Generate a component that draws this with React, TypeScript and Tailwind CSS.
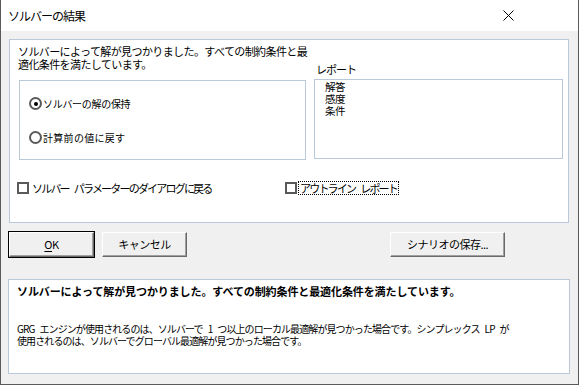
import React from "react";

const Radio = ({ checked }: { checked?: boolean }) => (
  <span className="relative inline-block w-[13px] h-[13px] rounded-full border-2 border-[#5a5a5a] bg-white shrink-0">
    {checked && <span className="absolute left-[2.5px] top-[2.5px] w-[4px] h-[4px] rounded-full bg-black" />}
  </span>
);

const Check = () => (
  <span className="inline-block w-[12px] h-[12px] border-2 border-[#5a5a5a] bg-white shrink-0" />
);

const Sp = () => <span className="inline-block w-[5px]" />;

const Btn = ({ children, w, def }: { children: React.ReactNode; w: string; def?: boolean }) => (
  <div className={`${def ? "border border-black" : "border border-transparent"}`}>
    <div
      className={`${w} h-[25px] flex items-center justify-center bg-[#f0f0f0] border-t border-l border-t-white border-l-white border-b border-r border-b-[#696969] border-r-[#696969] shadow-[inset_-1px_-1px_0_#a0a0a0] text-[11px] tracking-[-0.5px]`}
    >
      {children}
    </div>
  </div>
);

export default function App() {
  return (
    <div className="w-[579px] h-[385px] bg-[#f0f0f0] border-x border-b border-[#5a5a5a] flex flex-col text-black font-['Noto_Sans_CJK_JP',sans-serif] overflow-hidden">
      <div className="h-[31px] bg-white flex items-center justify-between shrink-0">
        <span className="pl-[7px] text-[12px] tracking-[-1px] leading-none">ソルバーの結果</span>
        <svg width="11" height="11" viewBox="0 0 11 11" className="mr-[64px]">
          <path d="M0.5 0.5 L10.5 10.5 M10.5 0.5 L0.5 10.5" stroke="#000" strokeWidth="1" />
        </svg>
      </div>
      <div className="pl-[7px] pt-[8px] flex flex-col">
        <div className="ml-[1px] w-[560px] h-[184px] border border-[#b9c9d9] bg-white flex flex-col">
          <div className="flex pl-[8px] pt-[5px]">
            <div className="w-[288px] flex flex-col">
              <p className="text-[11px] leading-[13px] tracking-[-0.6px] whitespace-nowrap">
                ソルバーによって解が見つかりました。すべての制約条件と最
                <br />
                適化条件を満たしています。
              </p>
              <div className="ml-[1px] mt-[9px] w-[287px] h-[80px] border border-[#b9c9d9] flex flex-col pl-[9px]">
                <div className="flex items-center mt-[16px] h-[13px] gap-[1px]">
                  <Radio checked />
                  <span className="text-[10px] tracking-[-0.3px] leading-none">ソルバーの解の保持</span>
                </div>
                <div className="flex items-center mt-[21px] h-[13px] gap-[1px]">
                  <Radio />
                  <span className="text-[10px] tracking-[0.3px] leading-none">計算前の値に戻す</span>
                </div>
              </div>
            </div>
            <div className="ml-[8px] flex flex-col pt-[18px]">
              <span className="ml-[2px] text-[11px] leading-[13px] tracking-[-1px]">レポート</span>
              <div className="mt-[3px] w-[249px] h-[80px] border border-[#b9c9d9] pl-[10px] pt-[1px] text-[10.5px] tracking-[-0.5px] flex flex-col">
                <span className="h-[12px] leading-[12px]">解答</span>
                <span className="h-[12px] leading-[12px]">感度</span>
                <span className="h-[12px] leading-[12px]">条件</span>
              </div>
            </div>
          </div>
          <div className="flex items-center mt-[22px] pl-[7px] h-[12px]">
            <div className="flex items-center w-[268px] gap-[3px]">
              <Check />
              <span className="text-[11px] tracking-[-1.8px] leading-none whitespace-nowrap">
                ソルバー<Sp />パラメーターのダイアログに戻る
              </span>
            </div>
            <div className="flex items-center gap-[1px]">
              <Check />
              <span className="text-[11px] tracking-[-1.8px] leading-[12px] whitespace-nowrap border border-dotted border-black px-[1px]">
                アウトライン<Sp />レポート
              </span>
            </div>
          </div>
        </div>
        <div className="flex mt-[8px] items-start">
          <Btn w="w-[85px]" def>
            <span className="underline underline-offset-2">O</span>K
          </Btn>
          <div className="ml-[6px]">
            <Btn w="w-[85px]">キャンセル</Btn>
          </div>
          <div className="ml-[201px]">
            <Btn w="w-[115px]">シナリオの保存...</Btn>
          </div>
        </div>
        <div className="mt-[21px] w-[562px] h-[95px] border border-[#b9c9d9] bg-white pl-[8px] pt-[5px]">
          <p className="text-[11px] leading-[13px] font-bold tracking-[-0.1px] whitespace-nowrap">
            ソルバーによって解が見つかりました。すべての制約条件と最適化条件を満たしています。
          </p>
          <div className="mt-[25px] text-[10px] tracking-[-0.9px] whitespace-nowrap flex flex-col">
            <span className="h-[12px] leading-[12px]">
              GRG<Sp />エンジンが使用されるのは、ソルバーで<Sp />1<Sp />つ以上のローカル最適解が見つかった場合です。シンプレックス<Sp />LP<Sp />が
            </span>
            <span className="h-[12px] leading-[12px]">使用されるのは、ソルバーでグローバル最適解が見つかった場合です。</span>
          </div>
        </div>
      </div>
    </div>
  );
}
